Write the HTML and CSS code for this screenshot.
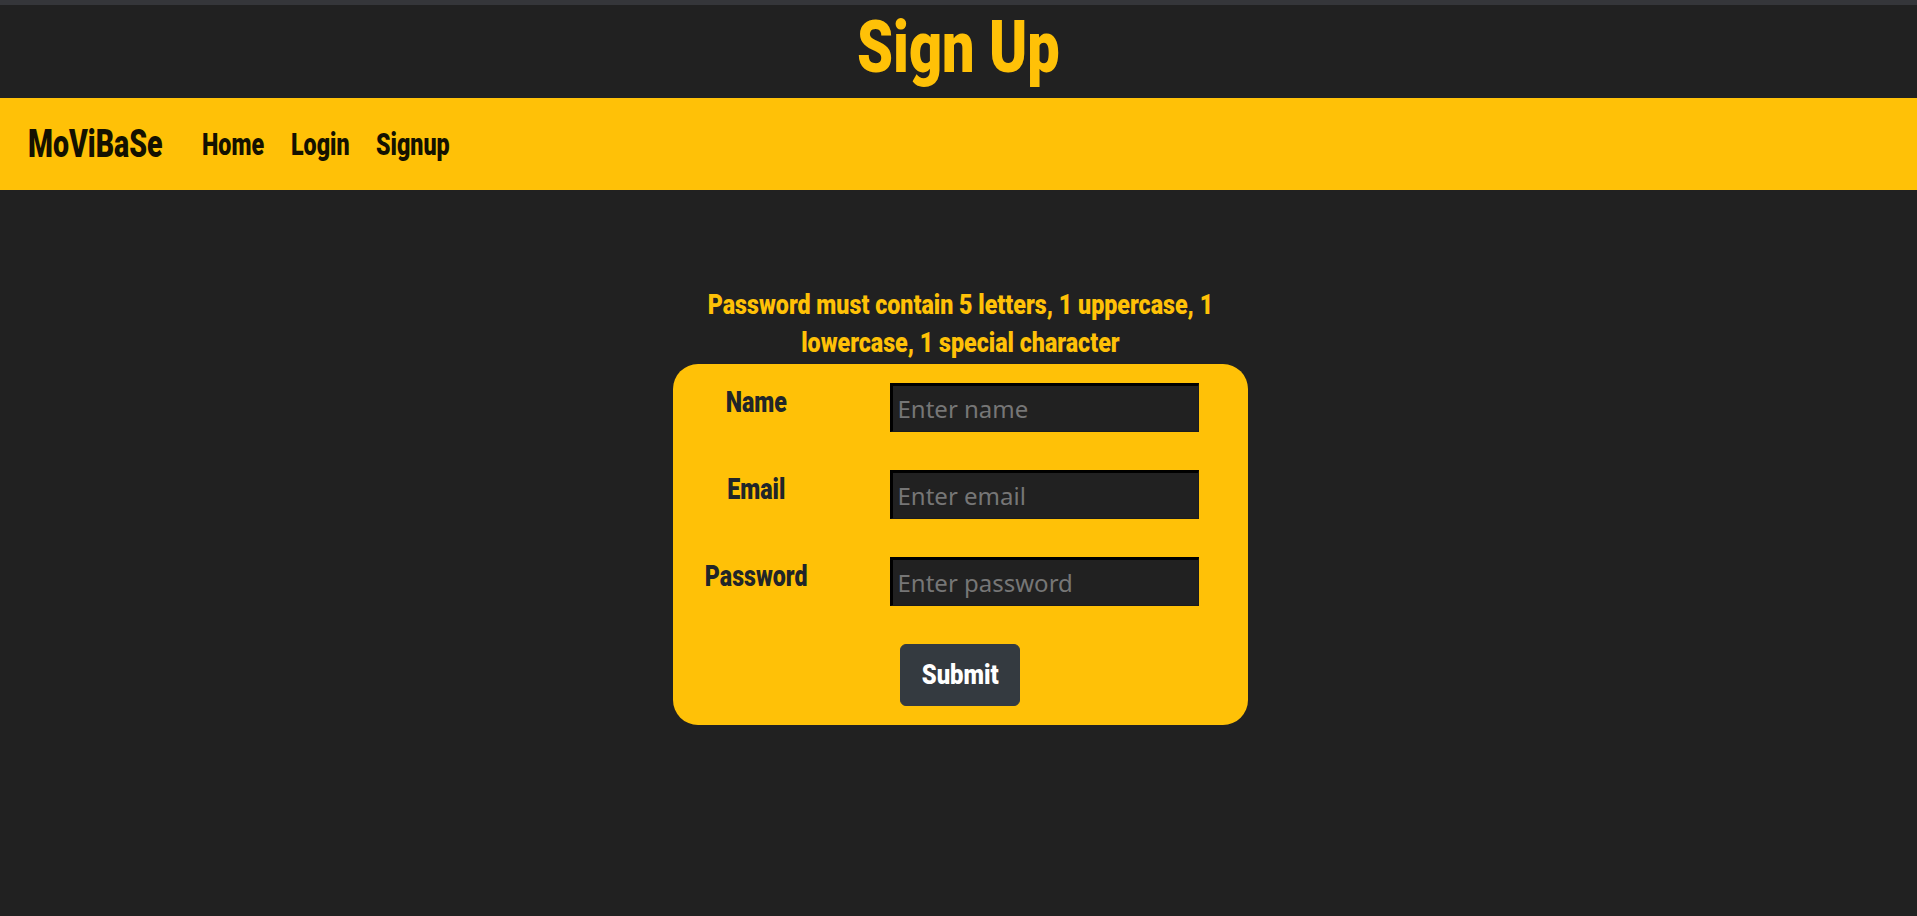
FILE: index.html
```html
<!DOCTYPE html>
<html lang="en">
<head>
<meta charset="utf-8">
<title>Sign Up</title>
<link rel="stylesheet" href="styles.css">
</head>
<body>
<div class="topstrip"></div>
<header class="title-bar">
  <h1 class="title"><span class="sq">Sign Up</span></h1>
</header>
<nav class="navbar">
  <a class="brand" href="#"><span class="sq">MoViBaSe</span></a>
  <ul class="nav-links">
    <li class="nl-home"><a href="#"><span class="sq">Home</span></a></li>
    <li class="nl-login"><a href="#"><span class="sq">Login</span></a></li>
    <li class="nl-signup"><a href="#"><span class="sq">Signup</span></a></li>
  </ul>
</nav>
<main class="main">
  <div class="wrap">
    <p class="hint"><span class="sq">Password must contain 5 letters, 1 uppercase, 1<br>lowercase, 1 special character</span></p>
    <form class="card">
      <label class="lbl" for="name"><span class="sq">Name</span></label>
      <input class="field" id="name" type="text" placeholder="Enter name">
      <label class="lbl" for="email"><span class="sq">Email</span></label>
      <input class="field" id="email" type="email" placeholder="Enter email">
      <label class="lbl" for="pw"><span class="sq">Password</span></label>
      <input class="field" id="pw" type="password" placeholder="Enter password">
      <div class="actions"><button class="btn" type="button"><span class="sq">Submit</span></button></div>
    </form>
  </div>
</main>
</body>
</html>
```

FILE: styles.css
```css
html, body {
  margin: 0;
  padding: 0;
  background: #212121;
  height: 100%;
}
body {
  font-family: Impact, Roboto, "DejaVu Sans", sans-serif;
  font-weight: 900;
}
.sq {
  display: inline-block;
  white-space: nowrap;
  transform: scaleX(var(--sx, 0.75));
}
.topstrip {
  height: 5px;
  background: #35363a;
}
.title-bar {
  height: 93px;
  box-sizing: border-box;
  padding-top: 6px;
  display: flex;
  justify-content: center;
  align-items: flex-start;
}
.title {
  margin: 0;
  color: #ffc107;
  font-size: 73px;
  line-height: 1;
  font-weight: 900;
  --sx: 0.79;
}
.navbar {
  height: 92px;
  background: #ffc107;
  display: flex;
  align-items: center;
  padding-left: 28px;
}
.navbar .sq {
  transform-origin: left center;
}
.brand {
  display: block;
  width: 134px;
  color: #141100;
  text-decoration: none;
  font-size: 38px;
  line-height: 1;
  --sx: 0.75;
}
.nav-links {
  list-style: none;
  margin: 0 0 0 40px;
  padding: 0;
  display: flex;
  gap: 28px;
}
.nav-links a {
  display: block;
  color: #141100;
  text-decoration: none;
  font-size: 31px;
  line-height: 1;
  --sx: 0.75;
}
.nl-home { width: 61px; }
.nl-login { width: 57px; }
.nl-signup { width: 74px; }
.main {
  display: flex;
  justify-content: center;
  padding-top: 96px;
  padding-left: 3px;
}
.wrap {
  width: 575px;
}
.hint {
  margin: 0 0 2px;
  display: flex;
  justify-content: center;
  color: #ffc107;
  text-align: center;
  font-size: 28px;
  line-height: 38px;
  --sx: 0.83;
}
.card {
  background: #ffc107;
  border-radius: 25px;
  padding: 19px 49px 19px 0;
  display: grid;
  grid-template-columns: 167px 309px;
  column-gap: 50px;
  row-gap: 38px;
}
.lbl {
  color: #212529;
  font-size: 29px;
  line-height: 1;
  text-align: center;
  padding-top: 5px;
  --sx: 0.8;
}
.field {
  box-sizing: border-box;
  width: 309px;
  height: 49px;
  margin: 0;
  background: #212121;
  border-style: solid;
  border-width: 3px 1px 1px 3px;
  border-color: #000 #1c1c1c #1c1c1c #000;
  padding: 0 5px;
  font-family: "Noto Sans", "Open Sans", sans-serif;
  font-weight: 400;
  font-size: 24px;
  color: #ddd;
  outline: none;
}
.field::placeholder {
  color: #767676;
}
.actions {
  grid-column: 1 / -1;
  display: flex;
  justify-content: center;
  margin-right: -49px;
}
.btn {
  width: 120px;
  height: 62px;
  background: #343a40;
  border: 1px solid #343a40;
  border-radius: 6px;
  color: #fff;
  font-family: inherit;
  font-weight: 900;
  font-size: 28px;
  line-height: 1;
  padding: 0;
  --sx: 0.85;
}
```
